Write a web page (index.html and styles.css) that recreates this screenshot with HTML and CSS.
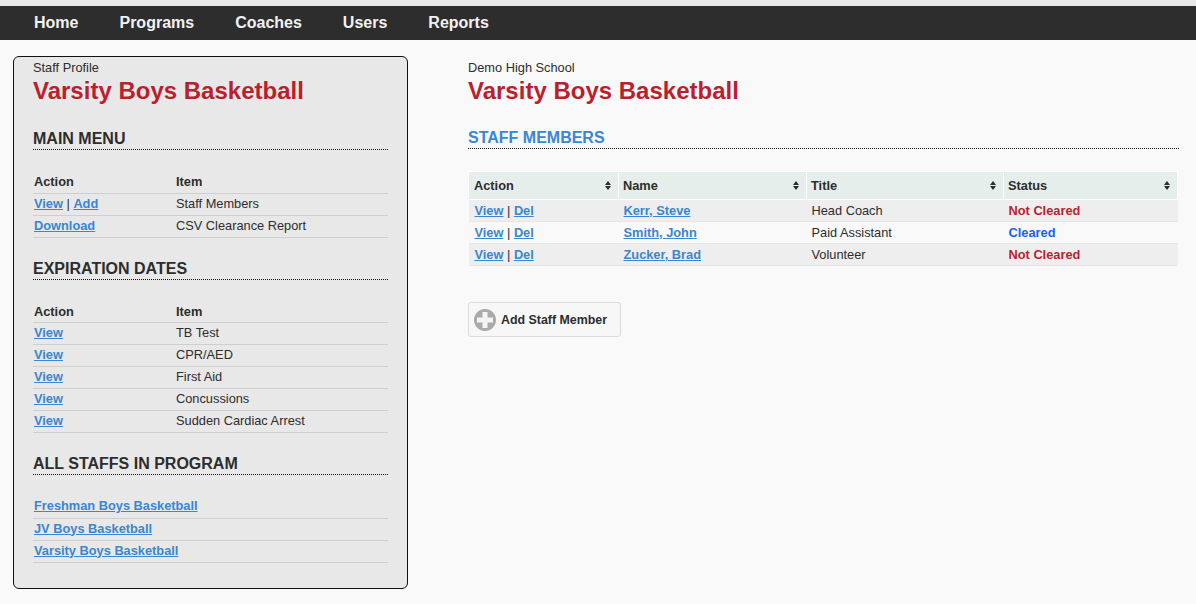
FILE: index.html
```html
<!DOCTYPE html>
<html lang="en">
  <head>
    <meta charset="UTF-8" />
    <title>Staff Members</title>
    <link rel="stylesheet" href="styles.css">
  </head>
  <body>
    <nav class="topnav">
      <a href="#">Home</a>
      <a href="#">Programs</a>
      <a href="#">Coaches</a>
      <a href="#">Users</a>
      <a href="#">Reports</a>
    </nav>
    <div class="page">
      <aside class="sidebar">
        <p class="eyebrow">Staff Profile</p>
        <h1 class="title">Varsity Boys Basketball</h1>

        <h2 class="section">MAIN MENU</h2>
        <table class="menu">
          <tr><th class="col-action">Action</th><th>Item</th></tr>
          <tr><td><a href="#">View</a> | <a href="#">Add</a></td><td>Staff Members</td></tr>
          <tr><td><a href="#">Download</a></td><td>CSV Clearance Report</td></tr>
        </table>

        <h2 class="section">EXPIRATION DATES</h2>
        <table class="menu">
          <tr><th class="col-action">Action</th><th>Item</th></tr>
          <tr><td><a href="#">View</a></td><td>TB Test</td></tr>
          <tr><td><a href="#">View</a></td><td>CPR/AED</td></tr>
          <tr><td><a href="#">View</a></td><td>First Aid</td></tr>
          <tr><td><a href="#">View</a></td><td>Concussions</td></tr>
          <tr><td><a href="#">View</a></td><td>Sudden Cardiac Arrest</td></tr>
        </table>

        <h2 class="section">ALL STAFFS IN PROGRAM</h2>
        <table class="menu programs">
          <tr><td><a href="#">Freshman Boys Basketball</a></td></tr>
          <tr><td><a href="#">JV Boys Basketball</a></td></tr>
          <tr><td><a href="#">Varsity Boys Basketball</a></td></tr>
        </table>
      </aside>

      <main class="content">
        <p class="eyebrow">Demo High School</p>
        <h1 class="title">Varsity Boys Basketball</h1>
        <h2 class="section blue">STAFF MEMBERS</h2>

        <table class="staff">
          <thead>
            <tr>
              <th class="w-action">Action<span class="sort"></span></th>
              <th class="w-name">Name<span class="sort"></span></th>
              <th class="w-title">Title<span class="sort"></span></th>
              <th>Status<span class="sort"></span></th>
            </tr>
          </thead>
          <tbody>
            <tr>
              <td><a href="#">View</a> | <a href="#">Del</a></td>
              <td><a href="#">Kerr, Steve</a></td>
              <td>Head Coach</td>
              <td class="not-cleared">Not Cleared</td>
            </tr>
            <tr>
              <td><a href="#">View</a> | <a href="#">Del</a></td>
              <td><a href="#">Smith, John</a></td>
              <td>Paid Assistant</td>
              <td class="cleared">Cleared</td>
            </tr>
            <tr>
              <td><a href="#">View</a> | <a href="#">Del</a></td>
              <td><a href="#">Zucker, Brad</a></td>
              <td>Volunteer</td>
              <td class="not-cleared">Not Cleared</td>
            </tr>
          </tbody>
        </table>

        <a href="#" class="add-btn">
          <svg width="22" height="22" viewBox="0 0 22 22" aria-hidden="true">
            <circle cx="11" cy="11" r="11" fill="#aaaaaa" />
            <path d="M8.500 3h5v5.500H19v5h-5.500V19h-5v-5.500H3v-5h5.500z" fill="#f4f4f4" />
          </svg>
          Add Staff Member
        </a>
      </main>
    </div>
  </body>
</html>
```

FILE: styles.css
```css
* {
  box-sizing: border-box;
}

body {
  margin: 0;
  padding-top: 6px;
  height: 604px;
  overflow: hidden;
  background-color: #f9f9f9;
  background-image: linear-gradient(#e8e8e8, #e8e8e8);
  background-repeat: no-repeat;
  background-size: 100% 6px;
  font-family: "Liberation Sans", Arial, sans-serif;
  font-size: 12.8px;
  color: #2d2d2d;
}

a {
  color: #3a86d1;
  font-weight: bold;
}

/* top bar */
.topnav {
  display: flex;
  gap: 41px;
  height: 34px;
  padding-left: 34px;
  background-color: #2d2d2d;
}

.topnav a {
  color: #f2f2f2;
  font-size: 16px;
  line-height: 33px;
  text-decoration: none;
}

.page {
  display: flex;
  padding: 16px 17px 0 13px;
}

.sidebar {
  width: 395px;
  height: 533px;
  flex-shrink: 0;
  padding: 3px 19px 0;
  background-color: #e8e8e8;
  border: 1px solid #111;
  border-radius: 6px;
}

.content {
  flex: 1;
  margin-left: 60px;
  padding-top: 4px;
}

.eyebrow {
  margin: 0;
  line-height: 15px;
}

.title {
  margin: 0;
  padding-top: 2px;
  font-size: 24px;
  line-height: 28px;
  color: #bb1e2d;
}

.section {
  margin: 17px 0 0;
  height: 25px;
  padding-top: 4px;
  font-size: 16px;
  line-height: 20px;
  border-bottom: 1px dotted #111;
}

.sidebar .title + .section {
  margin-top: 20px;
}

.content .section {
  margin-top: 19px;
}

.blue {
  color: #3a86d1;
}

/* sidebar tables */
.menu {
  width: 100%;
  margin-top: 21px;
  border-collapse: collapse;
}

.menu th,
.menu td {
  height: 22px;
  padding: 0 1px;
  line-height: 15px;
  text-align: left;
  border-bottom: 1px solid #cfcfcf;
}

.menu td {
  padding-bottom: 2px;
}

.col-action {
  width: 142px;
}

/* staff table */
.staff {
  width: 710px;
  margin-top: 22px;
  border-collapse: collapse;
  table-layout: fixed;
}

.staff th {
  position: relative;
  height: 28px;
  padding: 0 4px;
  text-align: left;
  background-color: #e6eeec;
  border: 1px solid #fff;
}

.staff th:first-child {
  padding-left: 5px;
}

.w-action {
  width: 150px;
}

.w-name {
  width: 188px;
}

.w-title {
  width: 197px;
}

.sort {
  position: absolute;
  right: 6px;
  top: 9px;
  width: 7px;
  height: 9px;
}

.sort::before,
.sort::after {
  content: "";
  position: absolute;
  left: 0;
  border-left: 3.500px solid transparent;
  border-right: 3.500px solid transparent;
}

.sort::before {
  top: 0;
  border-bottom: 4px solid #2d2d2d;
}

.sort::after {
  bottom: 0;
  border-top: 4px solid #2d2d2d;
}

.staff td {
  height: 22px;
  padding: 0 5px;
  border-bottom: 1px solid #e6e6e6;
}

.staff td:first-child {
  padding-left: 6px;
}

.staff tbody tr:nth-child(odd) {
  background-color: #eeeeee;
}

.not-cleared {
  color: #bb1e2d;
  font-weight: bold;
}

.cleared {
  color: #1363f2;
  font-weight: bold;
}

.add-btn {
  display: inline-flex;
  align-items: center;
  gap: 5px;
  width: 153px;
  height: 35px;
  margin-top: 36px;
  padding-left: 5px;
  font-size: 12.4px;
  color: #2d2d2d;
  text-decoration: none;
  background-color: #f7f7f7;
  border: 1px solid #dcdcdc;
  border-radius: 3px;
}
```
